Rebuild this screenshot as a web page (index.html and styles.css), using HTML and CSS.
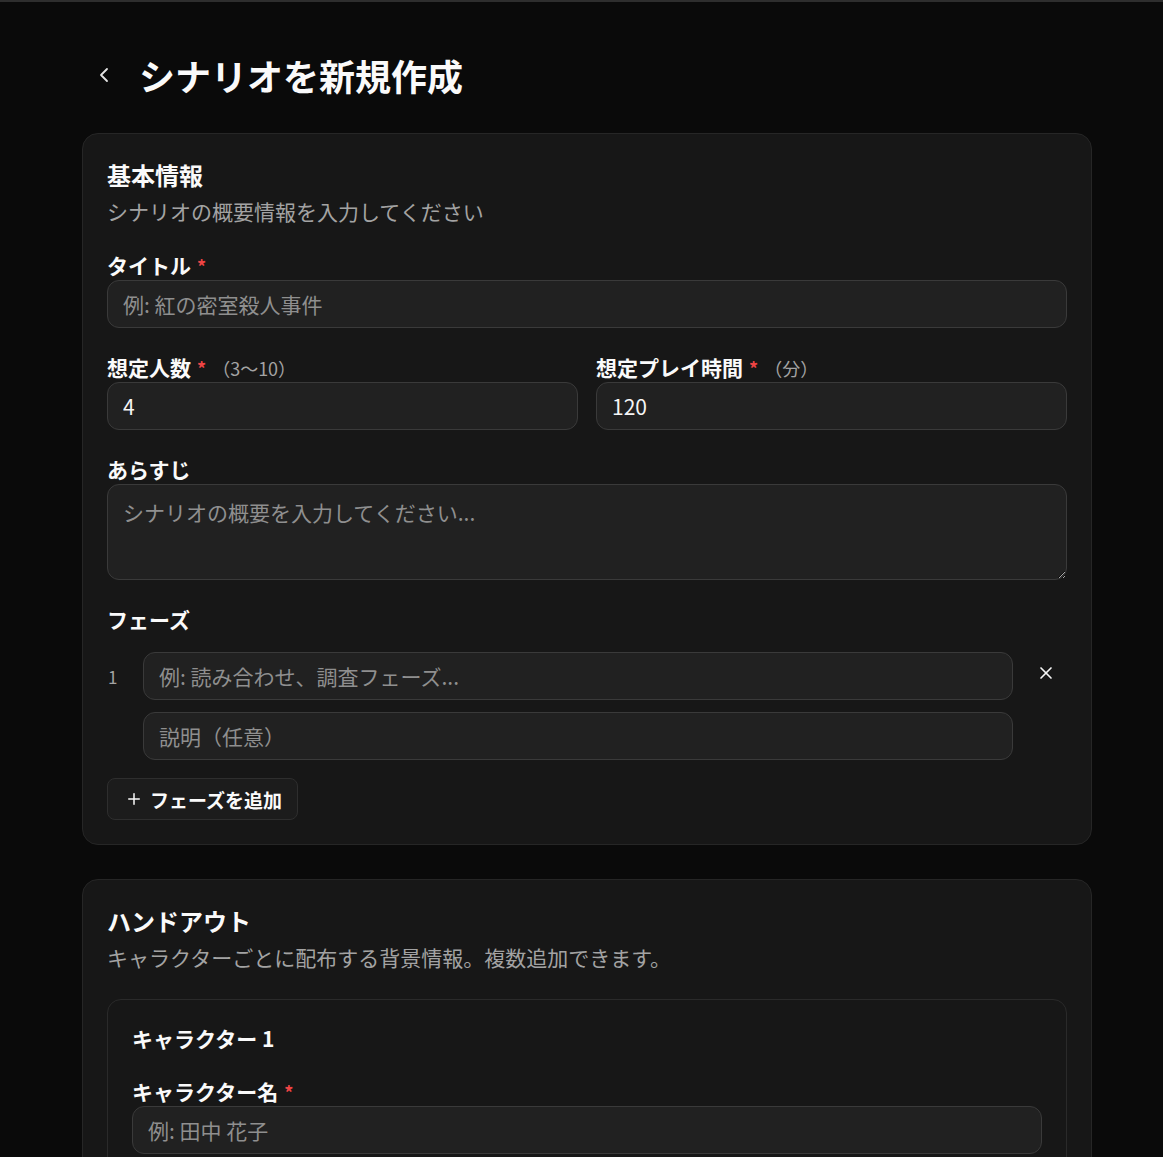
FILE: index.html
```html
<!DOCTYPE html>
<html lang="ja">
<head>
  <meta charset="UTF-8" />
  <title>シナリオを新規作成</title>
  <link rel="stylesheet" href="styles.css">
</head>
<body>
  <div class="page">
    <div class="page-header">
      <button class="back-btn" aria-label="戻る">
        <svg width="24" height="24" viewBox="0 0 24 24" fill="none" stroke="currentColor" stroke-width="1.8" stroke-linecap="round" stroke-linejoin="round"><path d="m15 18-6-6 6-6"/></svg>
      </button>
      <h1>シナリオを新規作成</h1>
    </div>

    <!-- 基本情報 -->
    <section class="card">
      <div class="card-head">
        <h2>基本情報</h2>
        <p class="desc">シナリオの概要情報を入力してください</p>
      </div>

      <div class="field">
        <label>タイトル<span class="req">*</span></label>
        <input type="text" placeholder="例: 紅の密室殺人事件" />
      </div>

      <div class="field-row">
        <div class="field">
          <label>想定人数<span class="req">*</span><span class="hint">（3〜10）</span></label>
          <input type="number" value="4" />
        </div>
        <div class="field">
          <label>想定プレイ時間<span class="req">*</span><span class="hint">（分）</span></label>
          <input type="number" value="120" />
        </div>
      </div>

      <div class="field">
        <label>あらすじ</label>
        <textarea placeholder="シナリオの概要を入力してください..."></textarea>
      </div>

      <div class="field">
        <label>フェーズ</label>
        <div class="phase">
          <span class="phase-no">1</span>
          <input type="text" placeholder="例: 読み合わせ、調査フェーズ..." />
          <button class="remove-btn" aria-label="削除">
            <svg width="20" height="20" viewBox="0 0 24 24" fill="none" stroke="currentColor" stroke-width="2" stroke-linecap="round"><path d="M18 6 6 18"/><path d="m6 6 12 12"/></svg>
          </button>
          <input class="phase-desc" type="text" placeholder="説明（任意）" />
        </div>
        <div>
          <button class="add-btn">
            <svg width="18" height="18" viewBox="0 0 24 24" fill="none" stroke="currentColor" stroke-width="2" stroke-linecap="round"><path d="M5 12h14"/><path d="M12 5v14"/></svg>
            フェーズを追加
          </button>
        </div>
      </div>
    </section>

    <!-- ハンドアウト -->
    <section class="card">
      <div class="card-head">
        <h2>ハンドアウト</h2>
        <p class="desc">キャラクターごとに配布する背景情報。複数追加できます。</p>
      </div>

      <div class="inner-card">
        <h3>キャラクター 1</h3>
        <div class="field">
          <label>キャラクター名<span class="req">*</span></label>
          <input type="text" placeholder="例: 田中 花子" />
        </div>
      </div>
    </section>
  </div>
</body>
</html>
```

FILE: styles.css
```css
body {
  margin: 0;
  background: #0a0a0a;
  color: #f5f5f5;
  font-family: "Noto Sans CJK JP", "Noto Sans", sans-serif;
  border-top: 2px solid #2e2e2e;
}

.page {
  width: 1010px;
  padding: 49px 0 40px 82px;
}

.page-header {
  display: flex;
  align-items: center;
  gap: 13px;
  margin-bottom: 34px;
}

.back-btn {
  width: 44px;
  height: 44px;
  display: flex;
  align-items: center;
  justify-content: center;
  background: none;
  border: none;
  color: #e5e5e5;
  padding: 0;
  cursor: pointer;
}

h1 {
  margin: 0;
  font-size: 36px;
  line-height: 48px;
  font-weight: 700;
  color: #fafafa;
}

.card {
  background: #171717;
  border: 1px solid #262626;
  border-radius: 16px;
  padding: 25px 24px 24px;
  display: flex;
  flex-direction: column;
  gap: 27px;
  margin-bottom: 34px;
}

.card-head h2 {
  margin: 0;
  font-size: 24px;
  line-height: 32px;
  font-weight: 700;
  color: #fafafa;
}

.card-head .desc {
  margin: 5px 0 0;
  font-size: 21px;
  line-height: 30px;
  color: #a3a3a3;
}

.field {
  display: flex;
  flex-direction: column;
}

.field label {
  font-size: 21px;
  line-height: 24px;
  font-weight: 700;
  color: #fafafa;
  margin-bottom: 2px;
}

.req {
  color: #ef4444;
  margin-left: 6px;
  font-size: 18px;
}

.hint {
  font-size: 18px;
  font-weight: 400;
  color: #a3a3a3;
  margin-left: 6px;
}

.field-row {
  display: grid;
  grid-template-columns: 1fr 1fr;
  gap: 18px;
}

input, textarea {
  box-sizing: border-box;
  width: 100%;
  height: 48px;
  background: #212121;
  border: 1px solid #3a3a3a;
  border-radius: 12px;
  padding: 0 15px;
  font-family: inherit;
  font-size: 21px;
  color: #f5f5f5;
  outline: none;
}

input::placeholder, textarea::placeholder {
  color: #8f8f8f;
}

input[type="number"]::-webkit-inner-spin-button,
input[type="number"]::-webkit-outer-spin-button {
  -webkit-appearance: none;
  margin: 0;
}

textarea {
  height: 96px;
  padding: 12px 15px;
  line-height: 30px;
  margin-top: 1px;
}

.phase {
  display: grid;
  grid-template-columns: 24px 1fr 42px;
  column-gap: 12px;
  row-gap: 12px;
  align-items: center;
  margin-top: 19px;
}

.phase-no {
  font-size: 17px;
  color: #a3a3a3;
  padding-left: 1px;
}

.phase-desc {
  grid-column: 2;
}

.remove-btn {
  width: 42px;
  height: 42px;
  margin-top: -6px;
  display: flex;
  align-items: center;
  justify-content: center;
  background: none;
  border: none;
  color: #f5f5f5;
  padding: 0;
  cursor: pointer;
}

.add-btn {
  display: inline-flex;
  align-items: center;
  gap: 7px;
  margin-top: 18px;
  height: 42px;
  padding: 0 15px 0 17px;
  background: #1c1c1c;
  border: 1px solid #2e2e2e;
  border-radius: 8px;
  color: #fafafa;
  font-family: inherit;
  font-size: 19px;
  font-weight: 700;
  cursor: pointer;
}

.inner-card {
  border: 1px solid #2a2a2a;
  border-radius: 14px;
  padding: 22px 24px 24px;
  display: flex;
  flex-direction: column;
  gap: 25px;
}

.inner-card h3 {
  margin: 0;
  font-size: 21px;
  line-height: 32px;
  font-weight: 700;
  color: #fafafa;
}
```
